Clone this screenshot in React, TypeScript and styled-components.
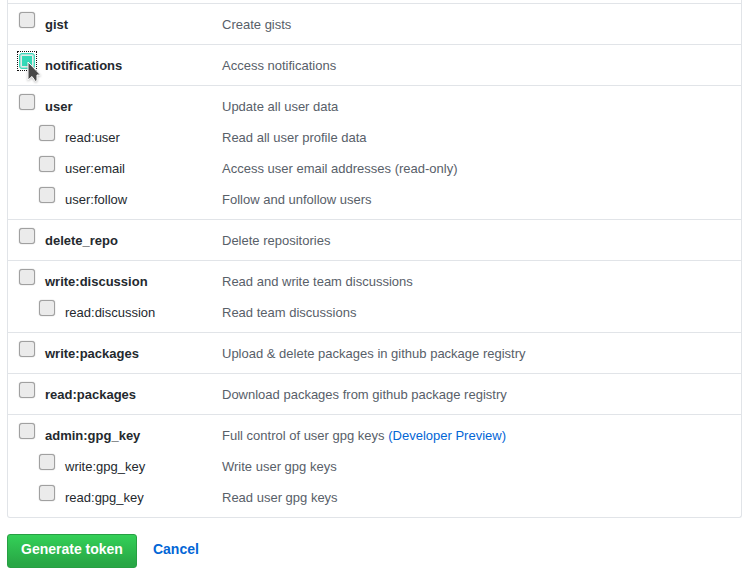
import React, { useState } from "react";
import styled, { createGlobalStyle } from "styled-components";

const GlobalStyle = createGlobalStyle`
  * { box-sizing: border-box; }
  body {
    margin: 0;
    background: #fff;
    color: #24292e;
    font-family: "Liberation Sans", Arial, Helvetica, sans-serif;
    font-size: 13px;
    line-height: 20px;
  }
`;

const Form = styled.form`
  padding: 0 8px 8px 7px;
`;

const ScopeList = styled.div`
  padding-top: 3px;
  border: 1px solid #e1e4e8;
  border-top: 0;
  border-radius: 0 0 3px 3px;
`;

const Group = styled.div`
  display: flex;
  flex-direction: column;
  gap: 11px;
  padding: 10px 11px;
  border-top: 1px solid #e1e4e8;
`;

const Row = styled.div`
  display: grid;
  grid-template-columns: 203px 1fr;
`;

const Name = styled.label<{ $child?: boolean }>`
  display: flex;
  gap: 10px;
  padding-left: ${(p) => (p.$child ? 20 : 0)}px;
  padding-top: 1px;
  height: 20px;
  font-weight: ${(p) => (p.$child ? 400 : 700)};
`;

const Description = styled.span`
  padding-top: 1px;
  height: 20px;
  color: #586069;
`;

const CheckSlot = styled.span`
  position: relative;
  width: 16px;
  height: 16px;
  margin-top: -3px;

  &:has(:checked) {
    outline: 1px dotted #111;
    outline-offset: 1px;
  }
`;

const Checkbox = styled.input`
  appearance: none;
  display: block;
  width: 16px;
  height: 16px;
  margin: 0;
  border: 1px solid #a0a0a0;
  border-radius: 3px;
  background: #ebebeb;
  box-shadow: 0 0 1px #909090;
  outline: 0;

  &:checked {
    border-color: #3fd9bb;
    background: #35d9b8;
    box-shadow: inset 0 0 0 1px #a5e6d9, inset 0 0 0 2px #e6ebea;
  }
`;

const Pointer = styled.svg`
  position: absolute;
  left: 7px;
  top: 8px;
  pointer-events: none;
  filter: drop-shadow(0 1px 1px rgba(0, 0, 0, 0.25));
`;

const Link = styled.a`
  color: #0366d6;
  text-decoration: none;
`;

const Actions = styled.div`
  display: flex;
  align-items: center;
  gap: 16px;
  margin-top: 16px;
  font-size: 14px;
  font-weight: 700;
`;

const SubmitButton = styled.button`
  height: 34px;
  padding: 0 13px 4px;
  border: 1px solid #279f43;
  border-radius: 3px;
  background: linear-gradient(#34d058, #28a745 90%);
  color: #fff;
  font: inherit;
`;

const CancelLink = styled(Link)`
  padding-bottom: 4px;
`;

type Scope = { name: string; text: string; preview?: boolean };

const groups: Scope[][] = [
  [{ name: "gist", text: "Create gists" }],
  [{ name: "notifications", text: "Access notifications" }],
  [
    { name: "user", text: "Update all user data" },
    { name: "read:user", text: "Read all user profile data" },
    { name: "user:email", text: "Access user email addresses (read-only)" },
    { name: "user:follow", text: "Follow and unfollow users" },
  ],
  [{ name: "delete_repo", text: "Delete repositories" }],
  [
    { name: "write:discussion", text: "Read and write team discussions" },
    { name: "read:discussion", text: "Read team discussions" },
  ],
  [{ name: "write:packages", text: "Upload & delete packages in github package registry" }],
  [{ name: "read:packages", text: "Download packages from github package registry" }],
  [
    { name: "admin:gpg_key", text: "Full control of user gpg keys", preview: true },
    { name: "write:gpg_key", text: "Write user gpg keys" },
    { name: "read:gpg_key", text: "Read user gpg keys" },
  ],
];

export default function App() {
  const [checked, setChecked] = useState<string[]>(["notifications"]);
  const toggle = (name: string) =>
    setChecked((list) => (list.includes(name) ? list.filter((n) => n !== name) : [...list, name]));

  return (
    <>
      <GlobalStyle />
      <Form onSubmit={(e) => e.preventDefault()}>
        <ScopeList>
          {groups.map((scopes) => (
            <Group key={scopes[0].name}>
              {scopes.map((scope, i) => (
                <Row key={scope.name}>
                  <Name $child={i > 0}>
                    <CheckSlot>
                      <Checkbox
                        type="checkbox"
                        checked={checked.includes(scope.name)}
                        onChange={() => toggle(scope.name)}
                      />
                      {scope.name === "notifications" && (
                        <Pointer width="16" height="24" viewBox="0 0 16 24" aria-hidden="true">
                          <path
                            d="M2 1V19L6 15.5L9.500 20.500L11 19.500V14H14.500Z"
                            fill="#484848"
                            stroke="#fff"
                            strokeWidth="1"
                          />
                        </Pointer>
                      )}
                    </CheckSlot>
                    {scope.name}
                  </Name>
                  <Description>
                    {scope.text}
                    {scope.preview && (
                      <>
                        {" "}
                        <Link href="#preview">(Developer Preview)</Link>
                      </>
                    )}
                  </Description>
                </Row>
              ))}
            </Group>
          ))}
        </ScopeList>
        <Actions>
          <SubmitButton type="submit">Generate token</SubmitButton>
          <CancelLink href="#cancel">Cancel</CancelLink>
        </Actions>
      </Form>
    </>
  );
}
